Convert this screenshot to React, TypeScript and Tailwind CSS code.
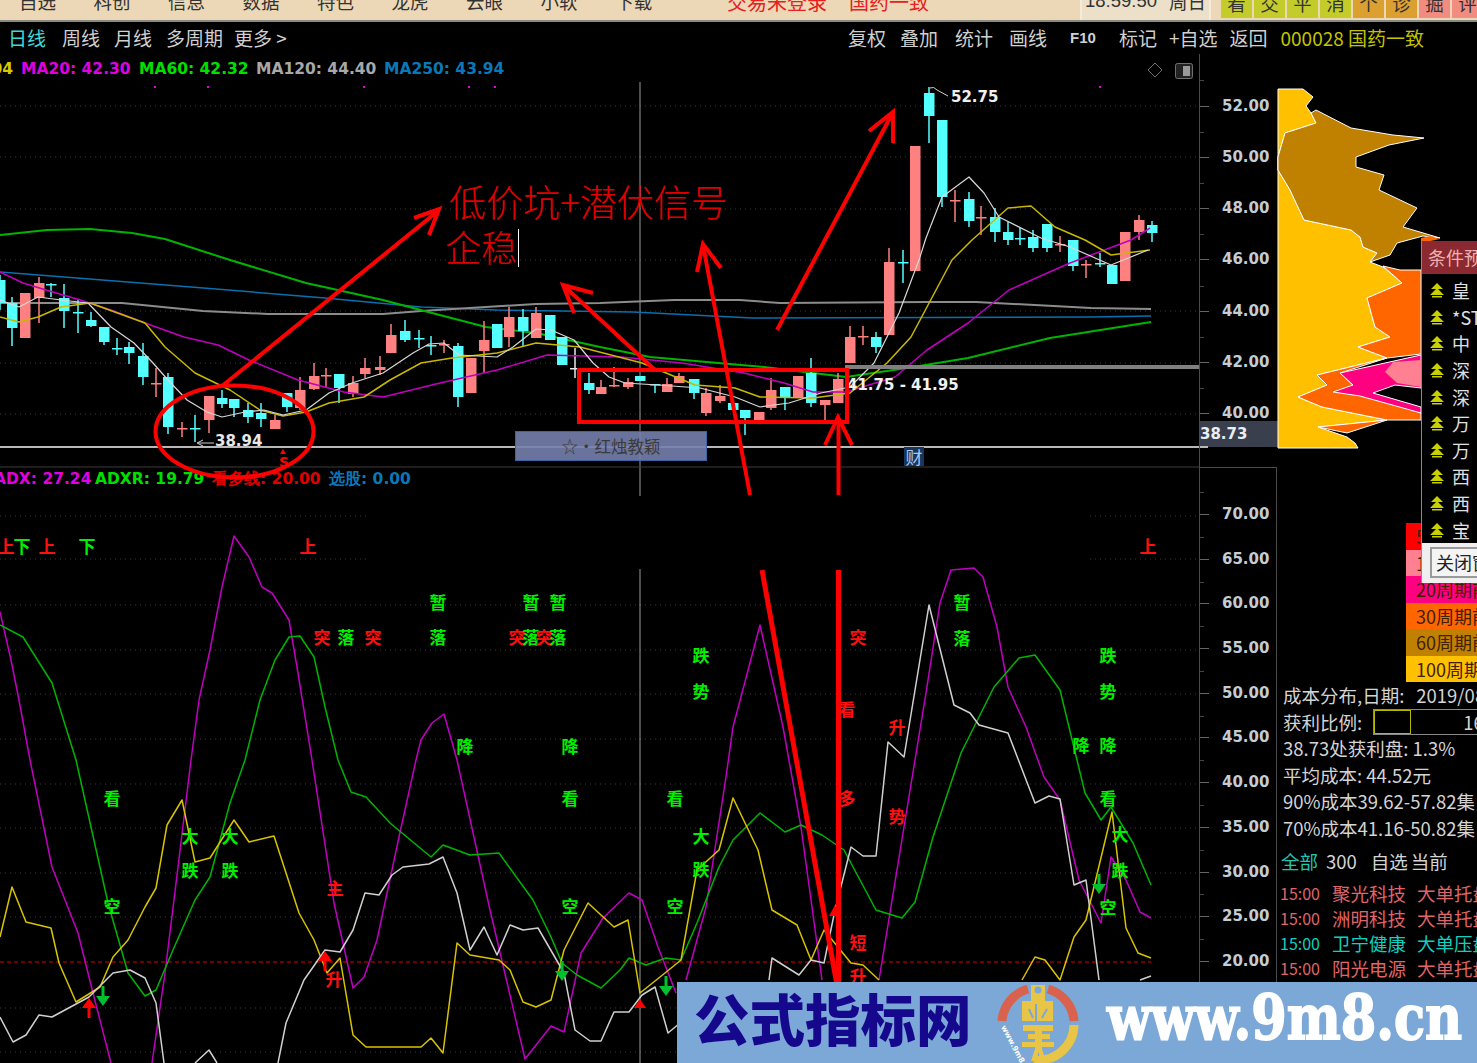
import React from "react";

const UP = "#ff8080";
const DOWN = "#54ffff";

// x, bodyTop, bodyBottom, wickTop, wickBottom, color
const candles: [number, number, number, number, number, string][] = [
  [0, 280, 303, 275, 310, DOWN],
  [12, 303, 328, 297, 346, DOWN],
  [25, 293, 338, 293, 338, UP],
  [39, 283, 298, 277, 323, UP],
  [51, 284, 285, 283, 297, DOWN],
  [64, 298, 311, 284, 328, DOWN],
  [78, 312, 313, 300, 333, DOWN],
  [91, 320, 326, 312, 327, DOWN],
  [104, 327, 342, 327, 345, DOWN],
  [117, 348, 349, 338, 355, DOWN],
  [129, 347, 353, 342, 364, DOWN],
  [143, 356, 377, 343, 385, DOWN],
  [156, 383, 384, 368, 397, UP],
  [168, 377, 427, 373, 434, DOWN],
  [182, 428, 429, 422, 437, UP],
  [195, 428, 429, 415, 442, DOWN],
  [209, 396, 420, 396, 433, UP],
  [222, 398, 404, 390, 408, DOWN],
  [234, 399, 408, 399, 417, DOWN],
  [248, 410, 417, 403, 423, DOWN],
  [261, 413, 419, 403, 427, DOWN],
  [275, 420, 429, 415, 429, UP],
  [287, 393, 407, 393, 412, DOWN],
  [300, 390, 408, 377, 410, UP],
  [314, 376, 389, 363, 390, UP],
  [326, 375, 376, 368, 387, UP],
  [339, 374, 388, 374, 403, DOWN],
  [353, 383, 394, 376, 397, UP],
  [365, 368, 374, 358, 378, UP],
  [380, 367, 370, 356, 375, UP],
  [391, 335, 353, 324, 353, UP],
  [405, 331, 340, 320, 342, DOWN],
  [419, 338, 339, 330, 348, DOWN],
  [431, 345, 346, 336, 355, DOWN],
  [444, 344, 345, 340, 353, UP],
  [458, 346, 397, 343, 407, DOWN],
  [471, 358, 393, 358, 393, UP],
  [484, 340, 351, 321, 373, UP],
  [497, 324, 348, 324, 348, DOWN],
  [509, 317, 337, 307, 347, UP],
  [523, 317, 331, 309, 347, DOWN],
  [536, 313, 338, 307, 338, UP],
  [550, 315, 340, 315, 340, DOWN],
  [562, 337, 365, 337, 365, DOWN],
  [575, 368, 369, 348, 378, "#e8e8e8"],
  [589, 383, 390, 373, 394, DOWN],
  [601, 387, 394, 380, 394, UP],
  [614, 385, 386, 367, 387, UP],
  [628, 382, 387, 378, 389, UP],
  [640, 376, 381, 376, 381, DOWN],
  [655, 384, 385, 384, 393, DOWN],
  [667, 384, 392, 378, 392, UP],
  [679, 376, 383, 373, 383, UP],
  [694, 379, 393, 379, 399, DOWN],
  [706, 393, 413, 388, 416, UP],
  [720, 396, 401, 385, 403, UP],
  [733, 403, 410, 403, 410, DOWN],
  [745, 410, 418, 410, 435, DOWN],
  [759, 412, 420, 412, 420, UP],
  [771, 390, 408, 378, 410, UP],
  [785, 387, 398, 387, 410, DOWN],
  [798, 376, 397, 376, 397, UP],
  [811, 373, 403, 358, 407, DOWN],
  [825, 400, 405, 400, 420, UP],
  [838, 379, 403, 373, 403, UP],
  [850, 337, 363, 326, 363, UP],
  [863, 336, 337, 326, 345, UP],
  [876, 337, 347, 332, 353, DOWN],
  [889, 262, 335, 248, 335, UP],
  [903, 262, 263, 250, 283, DOWN],
  [915, 146, 271, 146, 271, UP],
  [929, 93, 116, 87, 143, DOWN],
  [942, 120, 197, 120, 207, DOWN],
  [955, 200, 201, 190, 222, UP],
  [969, 199, 221, 192, 227, DOWN],
  [981, 217, 218, 206, 235, UP],
  [995, 217, 232, 208, 242, DOWN],
  [1008, 232, 240, 222, 245, DOWN],
  [1020, 238, 239, 228, 245, DOWN],
  [1033, 237, 248, 230, 252, DOWN],
  [1047, 224, 248, 224, 252, DOWN],
  [1060, 244, 245, 236, 252, UP],
  [1073, 240, 266, 240, 271, DOWN],
  [1086, 264, 265, 260, 278, UP],
  [1100, 263, 264, 253, 267, DOWN],
  [1112, 265, 284, 265, 284, DOWN],
  [1125, 232, 281, 232, 281, UP],
  [1139, 220, 232, 215, 240, UP],
  [1152, 225, 233, 221, 242, DOWN],
];

const ma5 = "0,300 19,307 38,297 61,300 88,303 111,327 134,343 153,363 168,380 187,400 207,412 222,417 245,412 264,410 283,415 306,410 329,393 352,383 383,373 413,353 429,344 444,343 459,355 497,357 513,347 536,329 551,330 574,340 593,363 609,377 625,383 658,385 700,388 735,397 760,407 789,403 821,393 850,387 874,363 899,313 919,260 926,238 942,197 969,177 984,193 999,217 1041,238 1070,247 1111,265 1148,250";
const ma10 = "0,317 19,322 38,317 61,307 90,303 145,323 165,347 195,373 230,390 260,410 283,416 306,412 329,403 364,397 390,380 421,363 452,358 497,353 536,343 580,347 642,363 695,385 735,388 760,397 813,398 850,393 887,363 911,337 952,260 972,240 1008,208 1031,206 1055,227 1085,240 1111,255 1150,250";
const ma20 = "0,272 23,283 46,290 77,299 111,310 145,323 184,337 218,345 249,360 298,380 344,392 383,397 440,383 497,370 547,355 621,357 682,363 744,373 784,383 813,392 846,392 895,377 927,350 968,323 1009,290 1070,263 1131,240 1150,228";
const ma60 = "0,235 47,230 90,229 132,233 165,239 230,260 306,283 383,300 432,313 486,327 536,333 600,347 650,357 764,367 846,377 907,368 968,358 1050,338 1151,322";
const ma120 = "0,303 122,303 203,311 268,314 383,314 421,311 536,304 600,303 674,300 740,300 780,303 927,302 976,302 1091,308 1151,309";
const ma250 = "0,272 77,278 191,287 325,298 421,307 497,310 633,312 752,318 1091,317 1151,316";

const adx = [
  "0,612 11,660 19,700 30,760 52,867 78,933 93,993 111,1063",
  "152,1063 165,973 178,867 191,760 199,700 210,650 222,587 234,536 249,557 262,587 272,593 289,620 298,673 312,760 334,903 353,988 364,977 377,940 399,837 416,760 421,740 432,723 444,714 457,760 490,910 525,1059 551,1026 564,1032 581,953 603,918 629,893 642,900 658,947 676,993",
  "686,980 706,907 726,777 733,727 760,625 783,727 801,827 822,980",
  "879,980 904,827 926,693 940,603 951,570 974,568 983,577 997,627 1008,687 1026,727 1044,777 1060,800 1079,880 1101,923 1111,857 1126,880 1140,912 1151,918",
];
const adxr = "0,625 23,637 52,683 76,760 91,827 108,903 128,973 145,996 156,990 173,950 195,900 210,877 230,803 245,760 260,700 275,660 289,637 300,636 314,657 325,707 338,760 351,792 366,797 390,823 431,857 443,845 470,855 499,853 533,900 551,937 562,963 577,975 601,988 620,970 629,958 646,965 666,958 681,960 697,923 719,867 733,840 760,813 785,832 801,825 822,835 844,850 876,910 902,918 915,902 933,837 961,753 994,687 1019,658 1035,655 1060,690 1085,793 1101,820 1111,807 1133,843 1151,885";
const yellowLine = [
  "0,937 12,887 26,922 51,928 59,963 76,1002 100,987 113,957 128,940 145,907 156,888 167,825 182,800 195,862 210,858 234,820 249,842 274,836 299,913 314,940 327,973 340,958 353,1035 366,1047 421,1047 431,1038 443,1053 457,943 470,955 499,960 510,970 523,1002 536,1007 551,1000 564,950 588,903 614,927 628,920 640,993 665,973 681,960 697,870 719,850 733,798 758,850 772,910 797,925 811,960 824,930 851,963 863,965 879,980",
  "1022,980 1035,957 1045,960 1060,980 1074,937 1086,920 1112,812 1126,928 1138,953 1151,958",
];
const whiteLine = [
  "0,1017 13,1042 26,1035 39,1015 52,1017 89,997 113,973 130,970 145,978 156,1003 164,1063",
  "195,1063 209,1050 217,1063",
  "278,1063 286,1023 304,980 325,950 340,952 353,930 365,893 379,895 392,875 403,867 429,864 443,857 457,893 470,950 484,927 497,955 510,925 523,930 538,928 564,973 575,1030 590,1041 601,1041 614,1012 629,1012 642,995 655,987 668,1033 680,1023",
  "769,980 772,958 799,975 811,960 824,963 835,910 851,847 863,856 876,856 888,742 904,757 929,605 954,705 970,713 979,725 1008,733 1035,803 1049,796 1060,799 1074,885 1086,880 1099,980",
  "1140,980 1151,976",
];

const G = "#00f000";
const R = "#ff1010";
// char, centre x, centre y, color
const signals: [string, number, number, string][] = [
  ["上", 6, 547, R], ["下", 22, 547, G], ["上", 47, 547, R], ["下", 87, 547, G], ["上", 308, 547, R], ["上", 1148, 547, R],
  ["突", 322, 638, R], ["落", 346, 638, G], ["突", 373, 638, R], ["暂", 438, 603, G], ["落", 438, 638, G],
  ["暂", 531, 603, G], ["暂", 558, 603, G], ["突", 517, 638, R], ["落", 531, 638, G], ["突", 544, 638, R], ["落", 558, 638, G],
  ["降", 465, 747, G], ["降", 570, 747, G], ["看", 112, 799, G], ["空", 112, 907, G], ["大", 190, 837, G], ["大", 230, 837, G],
  ["跌", 190, 871, G], ["跌", 230, 871, G], ["主", 335, 889, R], ["升", 334, 980, R], ["看", 570, 799, G], ["空", 570, 907, G],
  ["看", 675, 799, G], ["空", 675, 907, G], ["跌", 701, 656, G], ["势", 701, 692, G], ["大", 701, 837, G], ["跌", 701, 870, G],
  ["暂", 962, 603, G], ["落", 962, 639, G], ["跌", 1108, 656, G], ["势", 1108, 692, G], ["降", 1081, 746, G], ["降", 1108, 746, G],
  ["看", 1108, 799, G], ["大", 1120, 835, G], ["跌", 1120, 871, G], ["空", 1108, 908, G],
  ["突", 858, 638, R], ["看", 847, 710, R], ["多", 847, 799, R], ["升", 897, 728, R], ["势", 897, 817, R], ["短", 858, 943, R], ["升", 858, 977, R],
];

const upArrows: [number, number, string][] = [[89, 1007, "#ff0000"], [325, 960, "#ff0000"]];
const downArrows: [number, number][] = [[103, 997], [562, 972], [666, 987], [1099, 885]];

const lowerGrid = [516, 559, 605, 650, 694, 739, 784, 828, 873, 917, 1008, 1052];
const upperGrid = [106, 157, 209, 260, 311, 363, 414];

const CJK = "'Noto Sans CJK SC', sans-serif";
const NUM = "'DejaVu Sans', sans-serif";

function Line({ points, color, width = 1.5 }: { points: string; color: string; width?: number }) {
  return <polyline points={points} fill="none" stroke={color} strokeWidth={width} strokeLinejoin="round" />;
}

function Arrow({ line, legs, width = 4 }: { line: string; legs: string; width?: number }) {
  return (
    <g stroke="#ff0000" strokeWidth={width} fill="none">
      <polyline points={line} />
      <polyline points={legs} />
    </g>
  );
}

function UpperChart() {
  return (
    <svg viewBox="0 54 1199 413" className="block w-full h-full overflow-visible">
      {upperGrid.map((y) => (
        <line key={y} x1={0} x2={1199} y1={y} y2={y} stroke="#3a3a3a" strokeDasharray="1 4" />
      ))}
      <line x1={640} x2={640} y1={82} y2={467} stroke="#9a9a9a" />
      {[155, 208, 364, 469, 495, 1100].map((x) => (
        <rect key={x} x={x - 1} y={86} width={2} height={2} fill="#e000e0" />
      ))}

      <Line points={ma250} color="#0a6fae" />
      <Line points={ma120} color="#8c8c8c" width={2} />
      <Line points={ma60} color="#00b400" width={2} />
      {candles.map(([x, t, b, wt, wb, c], i) => (
        <g key={i}>
          <line x1={x} x2={x} y1={wt} y2={wb} stroke={c} strokeWidth={1.5} />
          <rect x={x - 5} y={t} width={10.5} height={Math.max(b - t, 1.5)} fill={c} />
        </g>
      ))}
      <Line points={ma20} color="#c000c0" />
      <Line points={ma10} color="#c8b800" />
      <Line points={ma5} color="#d8d8d8" width={1.2} />

      <rect x={845} y={365} width={354} height={4} fill="#808080" />
      <line x1={0} x2={1199} y1={447} y2={447} stroke="#b8b8b8" strokeWidth={2} />
      <line x1={0} x2={1199} y1={467} y2={467} stroke="#3c3c3c" />

      <path d="M203 440 L197 443 L203 446 M198 443 H214" stroke="#d0d0d0" fill="none" />
      <text x={215} y={446} fill="#e8e8e8" fontSize={15} fontWeight={700} fontFamily={NUM}>38.94</text>
      <text x={951} y={102} fill="#f0f0f0" fontSize={15} fontWeight={700} fontFamily={NUM}>52.75</text>
      <path d="M930 88 Q934 86 937 90 L948 96" stroke="#d0d0d0" fill="none" />
      <text x={847} y={390} fill="#f0f0f0" fontSize={15} fontWeight={700} fontFamily={NUM}>41.75 - 41.95</text>

      <path d="M283 449 L280 454 H286 Z" fill="#ff0000" />
      <text x={279} y={467} fill="#ff0000" fontSize={14} fontWeight={700} fontFamily={NUM}>S</text>

      <path d="M1155 63 L1162 70 L1155 77 L1148 70 Z" fill="none" stroke="#707070" />
      <rect x={1175.5} y={63.5} width={17} height={15} rx={2} fill="#222" stroke="#707070" />
      <rect x={1183} y={66} width={7} height={10} fill="#9a9a9a" />

      <text x={449} y={217} fill="#e00000" fontSize={37} fontWeight={300} fontFamily={CJK}>低价坑+潜伏信号</text>
      <text x={445} y={262} fill="#e00000" fontSize={36} fontWeight={300} fontFamily={CJK}>企稳</text>
      <line x1={518.5} x2={518.5} y1={229} y2={267} stroke="#ffffff" />

      <rect x={579} y={370} width={268} height={52} fill="none" stroke="#ff0000" strokeWidth={4} />
      <ellipse cx={234.5} cy={431.5} rx={79} ry={46} fill="none" stroke="#ff0000" strokeWidth={4} />
      <Arrow line="222,386 438,211" legs="414,218 439,209 429,235" />
      <Arrow line="655,370 564,286" legs="593,293 563,285 574,313" />
      <Arrow line="750,495 703,245" legs="697,272 703,244 721,268" />
      <Arrow line="777,330 892,114" legs="869,131 893,112 893,143" />
      <Arrow line="838.5,495 838.5,420" legs="825,445 838,417 852,445" />
    </svg>
  );
}

function LowerChart() {
  return (
    <svg viewBox="0 467 1199 596" className="block w-full h-full">
      {lowerGrid.map((y) => (
        <line key={y} x1={0} x2={1199} y1={y} y2={y} stroke="#3a3a3a" strokeDasharray="1 4" />
      ))}
      <line x1={640} x2={640} y1={467} y2={1063} stroke="#9a9a9a" />
      <rect x={370} y={496} width={720} height={73} fill="#000000" />

      <line x1={0} x2={1151} y1={962} y2={962} stroke="#e00000" strokeDasharray="4 3" />
      {adx.map((p, i) => <Line key={i} points={p} color="#c000c0" />)}
      <Line points={adxr} color="#00b400" />
      {yellowLine.map((p, i) => <Line key={i} points={p} color="#d8c400" />)}
      {whiteLine.map((p, i) => <Line key={i} points={p} color="#d0d0d0" />)}

      {signals.map(([c, x, y, color], i) => (
        <text key={i} x={x} y={y + 6} textAnchor="middle" fill={color} fontSize={17} fontWeight={700} fontFamily={CJK}>{c}</text>
      ))}

      {upArrows.map(([x, y, c]) => (
        <path key={x} d={`M${x} ${y - 9} L${x + 7} ${y + 1} H${x + 1.5} V${y + 11} H${x - 1.5} V${y + 1} H${x - 7} Z`} fill={c} />
      ))}
      {downArrows.map(([x, y]) => (
        <path key={x} d={`M${x} ${y + 9} L${x + 7} ${y - 1} H${x + 1.5} V${y - 11} H${x - 1.5} V${y - 1} H${x - 7} Z`} fill="#00c030" />
      ))}
      <path d="M640 999 L646 1008 H634 Z" fill="#ff0000" />
      <path d="M835 905 L841 916 H829 Z" fill="#ff0000" />

      <line x1={762} y1={570} x2={837} y2={985} stroke="#ff0000" strokeWidth={5} />
      <rect x={836} y={570} width={5} height={415} fill="#ff0000" />
    </svg>
  );
}

function Axis({ labels, step, pad }: { labels: string[]; step: string; pad: string }) {
  return (
    <div className={pad}>
      {labels.map((l) => (
        <div key={l} className={`relative flex items-center ${step}`}>
          <span className="absolute left-0 top-0 w-[4px] h-px bg-[#444]" />
          <span className="w-[9px] h-px bg-[#666]" />
          <span className="ml-[13px] text-[15px] font-bold text-[#c4ccd4] font-['DejaVu_Sans',sans-serif] leading-none">{l}</span>
        </div>
      ))}
    </div>
  );
}

function ChipChart() {
  return (
    <svg viewBox="1277 54 200 400" className="block w-[200px] h-[400px]">
      <polygon
        points="1278,89 1303,89 1313,97 1306,106 1311,113 1316,123 1285,133 1278,157 1278,170 1290,190 1304,220 1351,230 1360,237 1363,247 1377,253 1370,262 1383,267 1402,283 1367,298 1375,327 1390,337 1358,347 1387,358 1317,375 1327,385 1298,397 1322,407 1387,420 1318,427 1347,437 1355,443 1358,448 1278,448"
        fill="#ffc000"
        stroke="#ffffff"
      />
      <polygon
        points="1311,113 1316,110 1351,128 1393,135 1424,138 1389,145 1356,157 1356,167 1384,175 1379,190 1417,208 1403,227 1440,238 1423,236 1397,243 1390,255 1370,262 1377,253 1363,247 1360,237 1351,230 1304,220 1290,190 1278,170 1278,157 1285,133 1316,123"
        fill="#c08000"
        stroke="#ffffff"
      />
      <polygon
        points="1383,266 1402,283 1367,298 1375,327 1390,337 1358,347 1387,358 1421,354 1421,270 1400,270"
        fill="#ff6600"
        stroke="#ffffff"
      />
      <polygon
        points="1387,358 1317,375 1327,385 1298,397 1322,407 1387,420 1318,427 1347,433 1387,420 1421,420 1421,413 1360,392 1340,373"
        fill="#ff6600"
        stroke="#ffffff"
      />
      <polygon
        points="1421,355 1340,373 1353,385 1333,392 1360,396 1421,413 1421,407 1373,393 1395,385 1421,388"
        fill="#ff0080"
        stroke="#ffffff"
      />
      <polygon points="1421,360 1393,362 1385,372 1397,383 1421,387" fill="#ff8090" />
      <polygon points="1421,238 1430,236 1440,239 1421,243" fill="#ff6600" />
    </svg>
  );
}

const rankRows = ["皇", "*ST", "中", "深", "深", "万", "万", "西", "西", "宝"];

function AlertPopup() {
  return (
    <div className="absolute left-[144px] top-[187px] w-[56px] h-[342px] overflow-hidden flex flex-col bg-black border-l border-[#8a8a8a] z-20">
      <div className="h-[33px] bg-[#8a2a30] text-[#f0b0b0] text-[18px] leading-[33px] pl-[6px] whitespace-nowrap">条件预</div>
      <div className="flex-1 flex flex-col pt-[3px]">
        {rankRows.map((r, i) => (
          <div key={i} className="h-[26.6px] flex items-center whitespace-nowrap">
            <svg width="16" height="16" viewBox="0 0 16 16" className="ml-[7px] shrink-0">
              <path d="M8 1 L14 7 H2 Z M8 6 L15 13 H1 Z M3 14 H13 V15.5 H3 Z" fill="#c8d000" />
            </svg>
            <span className="ml-[7px] text-[18px] text-[#e0e0e0] leading-none">{r}</span>
          </div>
        ))}
      </div>
      <div className="h-[41px] bg-[#efefef] pl-[8px] pt-[4px]">
        <div className="h-[31px] w-[60px] border-2 border-[#9a9a9a] bg-[#f4f4f4] text-[#222] text-[18px] leading-[27px] pl-[4px] whitespace-nowrap">关闭窗</div>
      </div>
    </div>
  );
}

const legend: [string, string][] = [
  ["#ff0000", "5周期前"],
  ["#ff8090", "10周期前"],
  ["#ff0080", "20周期前"],
  ["#ff6600", "30周期前"],
  ["#c08000", "60周期前"],
  ["#ffc000", "100周期前"],
];

const feed: [string, string, string][] = [
  ["聚光科技", "大单托盘", "text-[#e06468]"],
  ["洲明科技", "大单托盘", "text-[#e06468]"],
  ["卫宁健康", "大单压盘", "text-[#10d0c0]"],
  ["阳光电源", "大单托盘", "text-[#e06468]"],
];

function StatsPanel() {
  return (
    <div className="-mt-[1px] pl-[6px] text-[18.5px] leading-[26.5px] text-[#d4d4d4] whitespace-nowrap overflow-hidden w-[200px]">
      <div className="flex">
        <span>成本分布,日期:</span>
        <span className="ml-[12px]">2019/08</span>
      </div>
      <div className="flex items-center">
        <span>获利比例:</span>
        <div className="ml-[11px] flex h-[26px] flex-1 border border-[#8a8a8a] bg-black">
          <div className="w-[37px] border border-[#b8b800]" />
          <div className="flex-1 pl-[52px] leading-[24px]">16</div>
        </div>
      </div>
      <div>38.73处获利盘: 1.3%</div>
      <div>平均成本: 44.52元</div>
      <div>90%成本39.62-57.82集</div>
      <div>70%成本41.16-50.82集</div>
      <div className="flex mt-[7px] -ml-[2px]">
        <span className="text-[#20c8b0]">全部</span>
        <span className="ml-[8px]">300</span>
        <span className="ml-[14px]">自选</span>
        <span className="ml-[3px]">当前</span>
      </div>
      <div className="mt-[6px] -ml-[3px] flex flex-col text-[#e06468]">
        {feed.map(([name, type, color]) => (
          <div key={name} className={`flex h-[25px] items-center leading-none ${color}`}>
            <span className="w-[52px] shrink-0 text-[16px]">15:00</span>
            <span className="w-[85px] shrink-0">{name}</span>
            <span className="shrink-0">{type}</span>
          </div>
        ))}
      </div>
    </div>
  );
}

function Logo() {
  return (
    <svg width="84" height="83" viewBox="996 980 84 83" className="shrink-0">
      <path d="M1002 1020 A36 36 0 0 1 1028 988" fill="none" stroke="#d9624e" strokeWidth="9" />
      <path d="M1048 988 A36 36 0 0 1 1074 1020" fill="none" stroke="#d9624e" strokeWidth="9" />
      <path d="M1074 1024 A36 36 0 0 1 1034 1059" fill="none" stroke="#e8c547" strokeWidth="9" />
      <path
        fillRule="evenodd"
        d="M1031 984 H1045 V1000 H1053 V1020 H1022 V1000 H1031 Z M1038 985.5 A3.5 3.5 0 1 0 1038 992.5 A3.5 3.5 0 1 0 1038 985.5 Z"
        fill="#e8c547"
      />
      <path d="M1036 1003 V1020 M1029 1008 L1033 1017 M1047 1008 L1042 1017" stroke="#7ca8d8" strokeWidth="2" fill="none" />
      <path d="M1023 1024 H1053 V1030 H1023 Z M1028 1033 H1050 V1038 H1028 Z M1022 1041 H1054 V1046 H1022 Z" fill="#e8c547" />
      <path d="M1035 1024 H1042 V1048 L1046 1060 H1041 L1038.5 1051 L1036 1060 H1031 L1035 1048 Z" fill="#e8c547" />
      <text x={0} y={0} fontSize={7.5} fill="#ffffff" fontWeight={700} fontFamily={NUM} transform="translate(1001 1026) rotate(62)">www.9m8.cn</text>
    </svg>
  );
}

function Banner() {
  return (
    <div className="absolute left-[677px] top-[982px] w-[800px] h-[81px] bg-[#7ca8d8] flex items-center z-30">
      <div className="ml-[17px] -mt-[9px] w-[280px] text-[55.5px] leading-none font-black text-[#16088c] whitespace-nowrap font-['Noto_Sans_CJK_SC',sans-serif]">公式指标网</div>
      <div className="ml-[22px]"><Logo /></div>
      <div className="ml-[27px] -mt-[11px] text-[51px] leading-none font-bold text-white whitespace-nowrap font-['DejaVu_Serif',serif] scale-y-[1.22] [-webkit-text-stroke:1.5px_white]">www.9m8.cn</div>
    </div>
  );
}

const menu = ["自选", "科创", "信息", "数据", "特色", "龙虎", "云眼", "小软", "下载"];
const quick: [string, string][] = [
  ["看", "bg-[#c4cc2c]"], ["交", "bg-[#c4cc2c]"], ["平", "bg-[#c4cc2c]"], ["消", "bg-[#c4cc2c]"],
  ["个", "bg-[#dca030]"], ["诊", "bg-[#dca030]"], ["掘", "bg-[#f08c80]"], ["评", "bg-[#f08c80]"],
];

function TopBar() {
  return (
    <div className="h-[22px] shrink-0 flex items-start overflow-hidden bg-[#ecd8b6] border-b-2 border-[#8a8a80] text-[18.5px] leading-none text-[#333]">
      <div className="flex pl-[19px] w-[727px] shrink-0 -mt-[8px] gap-[37.5px]">
        {menu.map((m) => <span key={m}>{m}</span>)}
      </div>
      <div className="flex gap-[22px] w-[353px] shrink-0 -mt-[8px] text-[20px] text-[#e82020]">
        <span>交易未登录</span>
        <span>国药一致</span>
      </div>
      <div className="w-[131px] shrink-0 h-[20px] pl-[3px] border-x-2 border-[#f4ecd8] bg-[#ece0c8] flex gap-[12px]">
        <span className="-mt-[8px] font-['Liberation_Sans',sans-serif]">18:59:50</span>
        <span className="-mt-[8px]">周日</span>
      </div>
      <div className="flex shrink-0 gap-[2px] ml-[10px] h-[18px]">
        {quick.map(([q, c]) => (
          <span key={q} className={`w-[31px] shrink-0 h-[18px] overflow-hidden text-center ${c}`}>
            <span className="block -mt-[6px]">{q}</span>
          </span>
        ))}
      </div>
    </div>
  );
}

function ToolBar() {
  return (
    <div className="relative h-[32px] pb-[2px] shrink-0 flex items-center text-[19px] text-[#d0d0d0] whitespace-nowrap leading-none">
      <div className="flex absolute left-[8px]">
        <span className="text-[#40d8d8]">日线</span>
        <span className="ml-[16px]">周线</span>
        <span className="ml-[14px]">月线</span>
        <span className="ml-[14px]">多周期</span>
        <span className="ml-[11px]">更多 &gt;</span>
      </div>
      <span className="ml-[848px]">复权</span>
      <span className="ml-[14px]">叠加</span>
      <span className="ml-[17px]">统计</span>
      <span className="ml-[16px]">画线</span>
      <span className="ml-[23px] text-[15px] font-bold font-['Liberation_Sans',sans-serif]">F10</span>
      <span className="ml-[23px]">标记</span>
      <span className="ml-[12px]">+自选</span>
      <span className="ml-[12px]">返回</span>
      <span className="ml-[13px] text-[#c4c400]">000028 国药一致</span>
    </div>
  );
}

const MaHeader = () => (
  <div className="absolute left-0 top-[6px] flex text-[15.5px] font-bold leading-[18px] whitespace-nowrap font-['DejaVu_Sans',sans-serif]">
    <span className="w-[21px] pr-[8px] overflow-hidden flex justify-end text-[#d8c800]">04</span>
    <span className="w-[118px] text-[#e000e0]">MA20: 42.30</span>
    <span className="w-[117px] text-[#00e000]">MA60: 42.32</span>
    <span className="w-[128px] text-[#a8a8a8]">MA120: 44.40</span>
    <span className="text-[#0a78b8]">MA250: 43.94</span>
  </div>
);

const AdxHeader = () => (
  <div className="absolute left-0 top-[3px] flex text-[15.5px] font-bold leading-[18px] whitespace-nowrap font-['DejaVu_Sans',sans-serif]">
    <span className="-ml-[6px] w-[101px] text-[#e000e0]">ADX: 27.24</span>
    <span className="w-[117px] text-[#00e000]">ADXR: 19.79</span>
    <span className="w-[117px] text-[#e00000]">看多线: 20.00</span>
    <span className="text-[#0a78b8]">选股: 0.00</span>
  </div>
);

export default function App() {
  return (
    <div className="relative w-[1477px] h-[1063px] overflow-hidden bg-black flex flex-col font-['Noto_Sans_CJK_SC',sans-serif]">
      <TopBar />
      <ToolBar />
      <div className="relative flex flex-1 min-h-0">
        <div className="w-[1199px] flex flex-col shrink-0">
          <div className="relative h-[413px] z-10">
            <UpperChart />
            <MaHeader />
            <div className="absolute left-[515px] top-[377px] w-[192px] h-[30px] bg-[#7680ac]/90 border border-[#3c64a8] text-center text-[#3a3a3a] text-[16.5px] leading-[28px]">☆·红烛教颖</div>
            <div className="absolute left-[904px] top-[393px] w-[20px] h-[19px] bg-[#16365e] text-center text-[#a8c8f0] text-[17px] leading-[19px]">财</div>
          </div>
          <div className="relative h-[596px]">
            <LowerChart />
            <AdxHeader />
          </div>
        </div>
        <div className="w-[78px] shrink-0 flex flex-col">
          <div className="relative h-[413px] border-l border-[#4a4a4a]">
            <Axis
              labels={["52.00", "50.00", "48.00", "46.00", "44.00", "42.00", "40.00"]}
              step="h-[51.3px]"
              pad="pt-[26.4px]"
            />
            <div className="absolute left-0 top-[367px] w-[78px] h-[26px] bg-[#3a3f4e] text-[15px] font-bold leading-[26px] text-[#e8eef4] font-['DejaVu_Sans',sans-serif]">38.73</div>
            <div className="absolute left-0 top-[392px] w-[8px] h-[2px] bg-[#b8b8b8]" />
          </div>
          <div className="h-[596px] border-l border-t border-r border-[#4a4a4a]">
            <Axis
              labels={["70.00", "65.00", "60.00", "55.00", "50.00", "45.00", "40.00", "35.00", "30.00", "25.00", "20.00"]}
              step="h-[44.7px]"
              pad="pt-[24.2px]"
            />
          </div>
        </div>
        <div className="relative flex-1 min-w-0 flex flex-col overflow-hidden">
          <ChipChart />
          <div className="ml-[129px] mt-[69px] w-[71px] flex flex-col overflow-hidden">
            {legend.map(([c, t]) => (
              <div key={c} className="h-[26.5px] pl-[10px] text-[18px] leading-[26.5px] text-[#402000] whitespace-nowrap" style={{ background: c }}>{t}</div>
            ))}
          </div>
          <div className="mt-[1px]"><StatsPanel /></div>
          <AlertPopup />
        </div>
      </div>
      <Banner />
    </div>
  );
}
